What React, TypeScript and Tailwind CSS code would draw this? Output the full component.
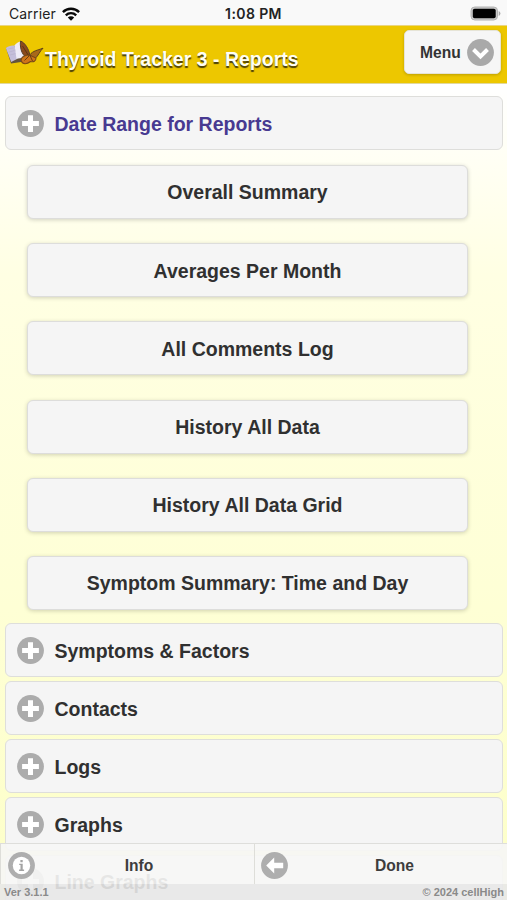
import React from "react";

const reports = [
  "Overall Summary",
  "Averages Per Month",
  "All Comments Log",
  "History All Data",
  "History All Data Grid",
  "Symptom Summary: Time and Day",
];

const sections = ["Symptoms & Factors", "Contacts", "Logs", "Graphs", "Line Graphs"];

function PlusIcon() {
  return (
    <svg className="h-[27px] w-[27px] shrink-0" viewBox="0 0 27 27">
      <circle cx="13.5" cy="13.5" r="13.4" fill="#acacac" />
      <path d="M11 5.2h5v5.9h5.9v5H16v5.8h-5v-5.8H5.1v-5H11z" fill="#fff" />
    </svg>
  );
}

function Collapsible({ label, accent = false }: { label: string; accent?: boolean }) {
  return (
    <div className="flex h-[54px] items-center rounded-[6px] border border-[#dededb] bg-[#f5f5f5] pl-[10.5px]">
      <PlusIcon />
      <span className={`ml-[11px] pt-px text-[19.5px] leading-6 font-bold whitespace-nowrap ${accent ? "text-[#483a91]" : "text-[#303030]"}`}>
        {label}
      </span>
    </div>
  );
}

function StatusBar() {
  return (
    <div className="relative flex h-[25px] items-center justify-between bg-[#f9f9f9] pr-[6px] pl-[9px] font-['Inter',sans-serif] text-[#222]">
      <div className="flex items-center gap-[6px] pt-[3px]">
        <span className="text-[14px] leading-5 tracking-[0.14px]">Carrier</span>
        <svg className="h-[14px] w-[18px]" viewBox="0 0 18 14">
          <g fill="none" stroke="#080808" strokeWidth="2.4">
            <path d="M.9 5.1a11.5 11.5 0 0 1 16.2 0" />
            <path d="M3.8 8.3a7.4 7.4 0 0 1 10.4 0" />
          </g>
          <path d="M9 13.8 5.8 10.6a4.5 4.5 0 0 1 6.4 0z" fill="#080808" />
        </svg>
      </div>
      <span className="absolute top-[4px] left-1/2 -translate-x-1/2 text-[14px] leading-5 font-semibold tracking-[0.4px] whitespace-nowrap">
        1:08 PM
      </span>
      <svg className="mt-[1px] h-[15px] w-[31px]" viewBox="0 0 31 15">
        <rect x="1" y="1" width="26.5" height="13" rx="3.8" fill="#c9c9c9" stroke="#b2b2b2" strokeWidth="1" />
        <rect x="2.8" y="2.8" width="22.9" height="9.4" rx="1.8" fill="#000" />
        <path d="M28.7 5v5q1.7-.8 1.7-2.5T28.7 5z" fill="#aaa" />
      </svg>
    </div>
  );
}

function BookButterfly() {
  return (
    <svg className="h-[28px] w-[39px] shrink-0" viewBox="0 0 39 28">
      <path d="M1 9 6 24.500l15-2.300L18 4l-7 2.200z" fill="#62543e" />
      <path d="m.8 9 5.400 14 6.300-3.300L9.500 6.600C7 6 3 7 .8 9z" fill="#c4bedb" />
      <path d="M9.500 6.600C11 4 14 2.200 17 2.500l3 16-8.500 1.200z" fill="#eeebf7" />
      <path d="m3 10 5.500-1.200M4 13l5.500-1.500M5 16l5.500-1.400" stroke="#b5aec9" strokeWidth=".6" />
      <path d="M15.500 2c4.500 1.800 8 7.500 9.500 14.200l-2 2.300C18 18 14.500 10.500 15.500 2z" fill="#8b4a1c" stroke="#58402a" strokeWidth="1" />
      <path d="M24.500 16c4-4.500 7.500-4.500 13.500-6.800-3.500 3.200-4.500 7.500-8 10.300z" fill="#a8691a" stroke="#5c421a" strokeWidth="1" />
      <path d="M24.500 16c-4.500-.7-9.300 2.700-8.200 6 1.300 3.500 5.500 3.500 9.200.5 3 .9 5.500-.5 5.500-3.500z" fill="#cf7519" stroke="#794817" strokeWidth="1.1" />
      <path d="m17.500 7 6 9.500M24.500 16.500l-5 5M25 16.500l2.500 5.500" stroke="#4d3115" strokeWidth=".8" />
    </svg>
  );
}

function Header() {
  return (
    <header className="flex h-[59px] items-start border-y border-t-[#ead580] border-b-[#e1d89d] bg-[#edc700] pr-[6px] pl-[5px]">
      <div className="mt-[13px]"><BookButterfly /></div>
      <h1 className="mt-[20.5px] ml-[1px] flex-1 text-[19.5px] leading-6 font-bold whitespace-nowrap text-[#fffef5] [text-shadow:0_1.5px_1px_#493e09]">
        Thyroid Tracker 3 - Reports
      </h1>
      <button className="mt-[4px] flex h-[44px] w-[97px] items-center justify-between rounded-[5px] border border-[#e6e4d6] bg-[#f6f6f6] pt-px pr-[6px] pl-[15px] shadow-[0_1px_3px_rgba(0,0,0,0.2)]">
        <span className="text-[15.6px] font-bold text-[#333]">Menu</span>
        <svg className="h-[27px] w-[27px]" viewBox="0 0 27 27">
          <circle cx="13.5" cy="13.5" r="13.4" fill="#a9a9a9" />
          <path d="m6.5 10.5 7 7 7-7" fill="none" stroke="#fff" strokeWidth="4" />
        </svg>
      </button>
    </header>
  );
}

function Footer() {
  return (
    <footer className="absolute inset-x-0 bottom-0 text-[#3d3d3d]">
      <div className="flex h-[41px] border-t border-[#dededb] bg-[#f6f6f5]/92">
        <button className="relative flex h-full w-[255px] items-center justify-center border-x border-[#deded9] pt-[4px] pl-[23px] text-[15.6px] font-bold">
          <svg className="absolute top-[7.5px] left-[6.5px] h-[27px] w-[27px]" viewBox="0 0 27 27">
            <circle cx="13.5" cy="13.5" r="13.4" fill="#aeaeae" />
            <circle cx="13.5" cy="13.5" r="8.7" fill="#fff" />
            <path d="M12.400 8h2.300v2.200h-2.300zM11.200 11.700h3.500v5.900h1.400V19h-5v-1.400h1.400v-4.500h-1.300z" fill="#a3a3a3" />
          </svg>
          Info
        </button>
        <button className="relative flex h-full flex-1 items-center justify-center pt-[4px] pl-[27px] text-[15.6px] font-bold">
          <svg className="absolute top-[7.5px] left-[6px] h-[27px] w-[27px]" viewBox="0 0 27 27">
            <circle cx="13.5" cy="13.5" r="13.4" fill="#aeaeae" />
            <path d="m5.200 13.500 8-8v5.300h9v5.400h-9v5.300z" fill="#fff" />
          </svg>
          Done
        </button>
      </div>
      <div className="flex h-[16px] items-center justify-between bg-[#e8e8e8]/90 pr-[3px] pb-px pl-[4px] text-[11px] leading-3 font-bold text-[#8a8a8a]">
        <span>Ver 3.1.1</span>
        <span>© 2024 cellHigh</span>
      </div>
    </footer>
  );
}

export default function App() {
  return (
    <div className="relative h-[900px] w-[507px] overflow-hidden bg-white font-['Liberation_Sans',Arial,sans-serif]">
      <StatusBar />
      <Header />
      <main className="h-[870px] bg-linear-to-b from-white via-[#ffffe3] via-[22%] to-[#fdffc6] pt-[12.4px] pr-[4px] pl-[5px]">
        <Collapsible label="Date Range for Reports" accent />
        <div className="mt-[14.6px] mb-[13.5px] flex flex-col gap-[24.2px] pr-[35px] pl-[22px]">
          {reports.map((report) => (
            <button
              key={report}
              className="flex h-[54px] shrink-0 items-center justify-center rounded-[6px] border border-[#dddddb] bg-[#f5f5f5] pt-[2px] text-[19.5px] font-bold whitespace-nowrap text-[#303030] shadow-[0_1px_4px_rgba(0,0,0,0.18)]"
            >
              {report}
            </button>
          ))}
        </div>
        <div className="flex flex-col gap-[3.9px]">
          {sections.map((label) => <Collapsible key={label} label={label} />)}
        </div>
      </main>
      <Footer />
    </div>
  );
}
